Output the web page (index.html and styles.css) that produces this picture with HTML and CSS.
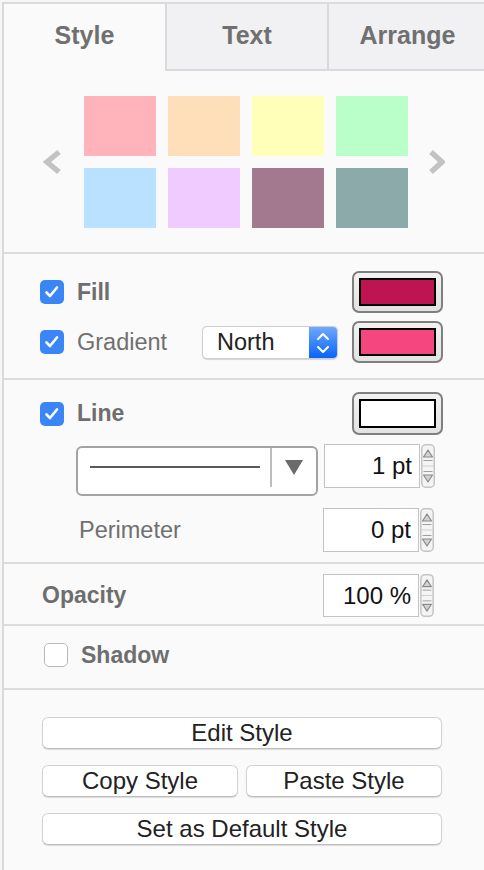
FILE: index.html
```html
<!DOCTYPE html>
<html>
<head>
<meta charset="utf-8">
<link rel="stylesheet" href="styles.css">
</head>
<body>
<div class="panel">
  <div class="tabs">
    <div class="tab active">Style</div>
    <div class="tab">Text</div>
    <div class="tab">Arrange</div>
  </div>

  <div class="section presets">
    <svg class="chev chev-left" width="19" height="26" viewBox="0 0 19 26"><polyline points="16,3 4,13 16,23" /></svg>
    <div class="swatches">
      <div class="sw c1"></div><div class="sw c2"></div><div class="sw c3"></div><div class="sw c4"></div>
      <div class="sw c5"></div><div class="sw c6"></div><div class="sw c7"></div><div class="sw c8"></div>
    </div>
    <svg class="chev chev-right" width="17" height="26" viewBox="0 0 17 26"><polyline points="3,3 14,13 3,23" /></svg>
  </div>

  <div class="section fill">
    <div class="row">
      <span class="cb checked"><svg width="24" height="24" viewBox="0 0 24 24"><polyline points="6.5,12.5 10,16 17,7.5" /></svg></span>
      <span class="label bold">Fill</span>
      <span class="colorbtn"><span class="inner fillc"></span></span>
    </div>
    <div class="row">
      <span class="cb checked"><svg width="24" height="24" viewBox="0 0 24 24"><polyline points="6.5,12.5 10,16 17,7.5" /></svg></span>
      <span class="label">Gradient</span>
      <span class="select">
        <span class="select-text">North</span>
        <span class="select-arrow"><svg width="28" height="31" viewBox="0 0 28 31"><polyline points="9,12 14,7 19,12" /><polyline points="9,20 14,25 19,20" /></svg></span>
      </span>
      <span class="colorbtn gap14"><span class="inner gradc"></span></span>
    </div>
  </div>

  <div class="section line">
    <div class="row r1">
      <span class="cb checked"><svg width="24" height="24" viewBox="0 0 24 24"><polyline points="6.5,12.5 10,16 17,7.5" /></svg></span>
      <span class="label bold">Line</span>
      <span class="colorbtn tall"><span class="inner linec"></span></span>
    </div>
    <div class="row r2">
      <span class="linesel">
        <span class="linepreview"></span>
        <span class="linesep"></span>
        <svg class="linetri" width="18" height="15" viewBox="0 0 18 15"><polygon points="0,0 18,0 9,15" /></svg>
      </span>
      <span class="numwrap first">
        <span class="num">1 pt</span>
        <svg class="stepper" width="14" height="44" viewBox="0 0 14 44"><rect x="0.75" y="0.75" width="12.5" height="42.5" rx="4" class="st-bg"/><line x1="1" y1="22" x2="13" y2="22" class="st-mid"/><polygon points="2.5,13 7,6 11.5,13" class="st-tri"/><line x1="2.5" y1="16.5" x2="11.5" y2="16.5" class="st-base"/><line x1="2.5" y1="27.5" x2="11.5" y2="27.5" class="st-base"/><polygon points="2.5,31 7,38 11.5,31" class="st-tri"/></svg>
      </span>
    </div>
    <div class="row r3">
      <span class="label">Perimeter</span>
      <span class="numwrap">
        <span class="num">0 pt</span>
        <svg class="stepper" width="14" height="44" viewBox="0 0 14 44"><rect x="0.75" y="0.75" width="12.5" height="42.5" rx="4" class="st-bg"/><line x1="1" y1="22" x2="13" y2="22" class="st-mid"/><polygon points="2.5,13 7,6 11.5,13" class="st-tri"/><line x1="2.5" y1="16.5" x2="11.5" y2="16.5" class="st-base"/><line x1="2.5" y1="27.5" x2="11.5" y2="27.5" class="st-base"/><polygon points="2.5,31 7,38 11.5,31" class="st-tri"/></svg>
      </span>
    </div>
  </div>

  <div class="section opacity">
    <div class="row">
      <span class="label bold">Opacity</span>
      <span class="numwrap">
        <span class="num short">100 %</span>
        <svg class="stepper" width="14" height="43" viewBox="0 0 14 44"><rect x="0.75" y="0.75" width="12.5" height="42.5" rx="4" class="st-bg"/><line x1="1" y1="22" x2="13" y2="22" class="st-mid"/><polygon points="2.5,13 7,6 11.5,13" class="st-tri"/><line x1="2.5" y1="16.5" x2="11.5" y2="16.5" class="st-base"/><line x1="2.5" y1="27.5" x2="11.5" y2="27.5" class="st-base"/><polygon points="2.5,31 7,38 11.5,31" class="st-tri"/></svg>
      </span>
    </div>
  </div>

  <div class="section shadow">
    <div class="row">
      <span class="cb"></span>
      <span class="label bold">Shadow</span>
    </div>
  </div>

  <div class="section buttons">
    <div class="btn">Edit Style</div>
    <div class="btnrow">
      <div class="btn">Copy Style</div>
      <div class="btn">Paste Style</div>
    </div>
    <div class="btn">Set as Default Style</div>
  </div>
</div>
</body>
</html>
```

FILE: styles.css
```css
html, body {
  margin: 0;
  padding: 0;
  overflow: hidden;
  background: #f6f6f6;
}
body {
  width: 484px;
  height: 870px;
  font-family: "Liberation Sans", Arial, Helvetica, sans-serif;
}
.panel {
  margin: 2px 0 0 2px;
  width: 482px;
  height: 866px;
  border-top: 2px solid #dadadd;
  border-left: 2px solid #dadadd;
  background: #fafafa;
}
.tabs {
  display: flex;
  height: 67px;
}
.tab {
  box-sizing: border-box;
  width: 161px;
  height: 67px;
  padding-top: 19px;
  text-align: center;
  font-size: 25px;
  line-height: 25px;
  font-weight: bold;
  color: #707070;
  background: #f1f1f3;
  border-left: 2px solid #dadadd;
  border-bottom: 2px solid #dadadd;
}
.tab.active {
  background: #fafafa;
  border-left: none;
  border-bottom: none;
}
.tab + .tab { width: 162px; }
.tab:last-child { width: 159px; }

.section {
  border-bottom: 2px solid #dcdcdf;
}
.presets {
  display: flex;
  align-items: center;
  padding: 25px 0 24px 39px;
}
.chev polyline {
  fill: none;
  stroke: #c3c3c3;
  stroke-width: 5.5;
  stroke-linejoin: miter;
}
.chev { filter: blur(0.6px); }
.chev-left { margin-right: 22px; }
.chev-right { margin-left: 20px; }
.swatches {
  display: grid;
  grid-template-columns: repeat(4, 72px);
  grid-auto-rows: 60px;
  gap: 12px;
}
.c1 { background: #ffb3ba; }
.c2 { background: #ffdfba; }
.c3 { background: #ffffba; }
.c4 { background: #baffc9; }
.c5 { background: #bae1ff; }
.c6 { background: #f0cbff; }
.c7 { background: #a2798f; }
.c8 { background: #8caaaa; }

.row {
  display: flex;
  align-items: center;
}
.fill {
  padding: 17px 43px 15px 36px;
  display: flex;
  flex-direction: column;
  gap: 8px;
}
.fill .row { height: 42px; }

.cb {
  box-sizing: border-box;
  width: 24px;
  height: 24px;
  border-radius: 5px;
  background: #fff;
  border: 1.5px solid #b8b8b8;
  flex: none;
  display: block;
}
.cb.checked {
  background: #3b86f6;
  border: none;
}
.cb svg { display: block; }
.cb polyline {
  fill: none;
  stroke: #fff;
  stroke-width: 2.6;
  stroke-linecap: round;
  stroke-linejoin: round;
}
.label {
  margin-left: 13px;
  font-size: 23.5px;
  color: #707070;
}
.label.bold {
  font-weight: bold;
  font-size: 23px;
  color: #6e6e6e;
}
.colorbtn {
  box-sizing: border-box;
  margin-left: auto;
  width: 91px;
  height: 42px;
  padding: 5px;
  border: 2px solid #7f7f7f;
  border-radius: 7px;
  background: linear-gradient(#f2f2f2, #e2e2e2);
  display: block;
  flex: none;
}
.colorbtn.tall { height: 43px; }
.colorbtn.gap14 { margin-left: 14px; }
.inner {
  display: block;
  box-sizing: border-box;
  width: 100%;
  height: 100%;
  border: 2px solid #000;
}
.fillc { background: #be1452; }
.gradc { background: #f54680; }
.linec { background: #fff; }

.select {
  box-sizing: border-box;
  margin-left: auto;
  width: 136px;
  height: 33px;
  border: 1px solid #cfcfcf;
  border-radius: 5px;
  background: #fff;
  display: flex;
  align-items: center;
  box-shadow: 0 0.5px 1px rgba(0,0,0,0.15);
  flex: none;
}
.select-text {
  flex: 1;
  padding-left: 14px;
  font-size: 23.5px;
  color: #222;
}
.select-arrow {
  width: 28px;
  height: 31px;
  border-radius: 0 4px 4px 0;
  background: linear-gradient(#6fa8ff, #0964fa);
  display: block;
}
.select-arrow svg { display: block; }
.select-arrow polyline {
  fill: none;
  stroke: #fff;
  stroke-width: 2;
  stroke-linecap: round;
  stroke-linejoin: round;
}

.line {
  padding: 12px 0 10px 0;
  display: flex;
  flex-direction: column;
}
.line .r1 {
  height: 43px;
  padding: 0 43px 0 36px;
}
.line .r2 {
  margin-top: 9px;
  height: 52px;
  padding-left: 72px;
  align-items: flex-start;
}
.line .r3 {
  margin-top: 12px;
  height: 44px;
  padding: 0 52px 0 75px;
}
.line .r3 .label { margin-left: 0; }
.linesel {
  box-sizing: border-box;
  margin-top: 2px;
  width: 242px;
  height: 50px;
  border: 2px solid #a3a3a3;
  border-radius: 6px;
  background: #fff;
  display: flex;
  align-items: flex-start;
  flex: none;
}
.linepreview {
  margin: 18px 0 0 12px;
  width: 170px;
  height: 2px;
  background: #5a5a5a;
}
.linesep {
  margin: 0 0 0 10px;
  width: 2px;
  height: 39px;
  background: #bdbdbd;
}
.linetri {
  margin: 12px 0 0 13px;
  filter: blur(0.4px);
}
.linetri polygon { fill: #6b6b6b; }

.numwrap {
  display: flex;
  align-items: center;
  margin-left: auto;
  flex: none;
}
.numwrap.first { margin-left: 6px; }
.num {
  box-sizing: border-box;
  width: 96px;
  height: 44px;
  border: 1px solid #c3c3c3;
  background: #fff;
  text-align: right;
  padding-right: 7px;
  font-size: 24px;
  line-height: 42px;
  color: #111;
}
.num.short { height: 43px; line-height: 41px; }
.stepper { display: block; margin-left: 1px; }
.st-bg { fill: #f4f4f4; stroke: #c4c4c4; stroke-width: 1.5; }
.st-mid { stroke: #cfcfcf; stroke-width: 1; }
.st-tri { fill: #d2d2d2; stroke: #8a8a8a; stroke-width: 1.2; stroke-linejoin: round; }
.st-base { stroke: #a0a0a0; stroke-width: 1; }

.opacity {
  padding: 10px 52px 7px 38px;
}
.opacity .row { height: 43px; }
.opacity .label { margin-left: 0; }

.shadow {
  padding: 17px 0 21px 40px;
}
.shadow .row { height: 24px; }

.buttons {
  border-bottom: none;
  padding: 27px 44px 0 38px;
  display: flex;
  flex-direction: column;
  gap: 16px;
}
.btnrow {
  display: flex;
  gap: 8px;
}
.btnrow .btn { flex: 1; }
.btn {
  box-sizing: border-box;
  height: 32px;
  background: #fff;
  border: 1px solid #d2d2d2;
  border-bottom-color: #bdbdbd;
  border-radius: 6px;
  box-shadow: 0 1px 1px rgba(0,0,0,0.12);
  text-align: center;
  font-size: 24px;
  line-height: 30px;
  color: #222;
}
```
